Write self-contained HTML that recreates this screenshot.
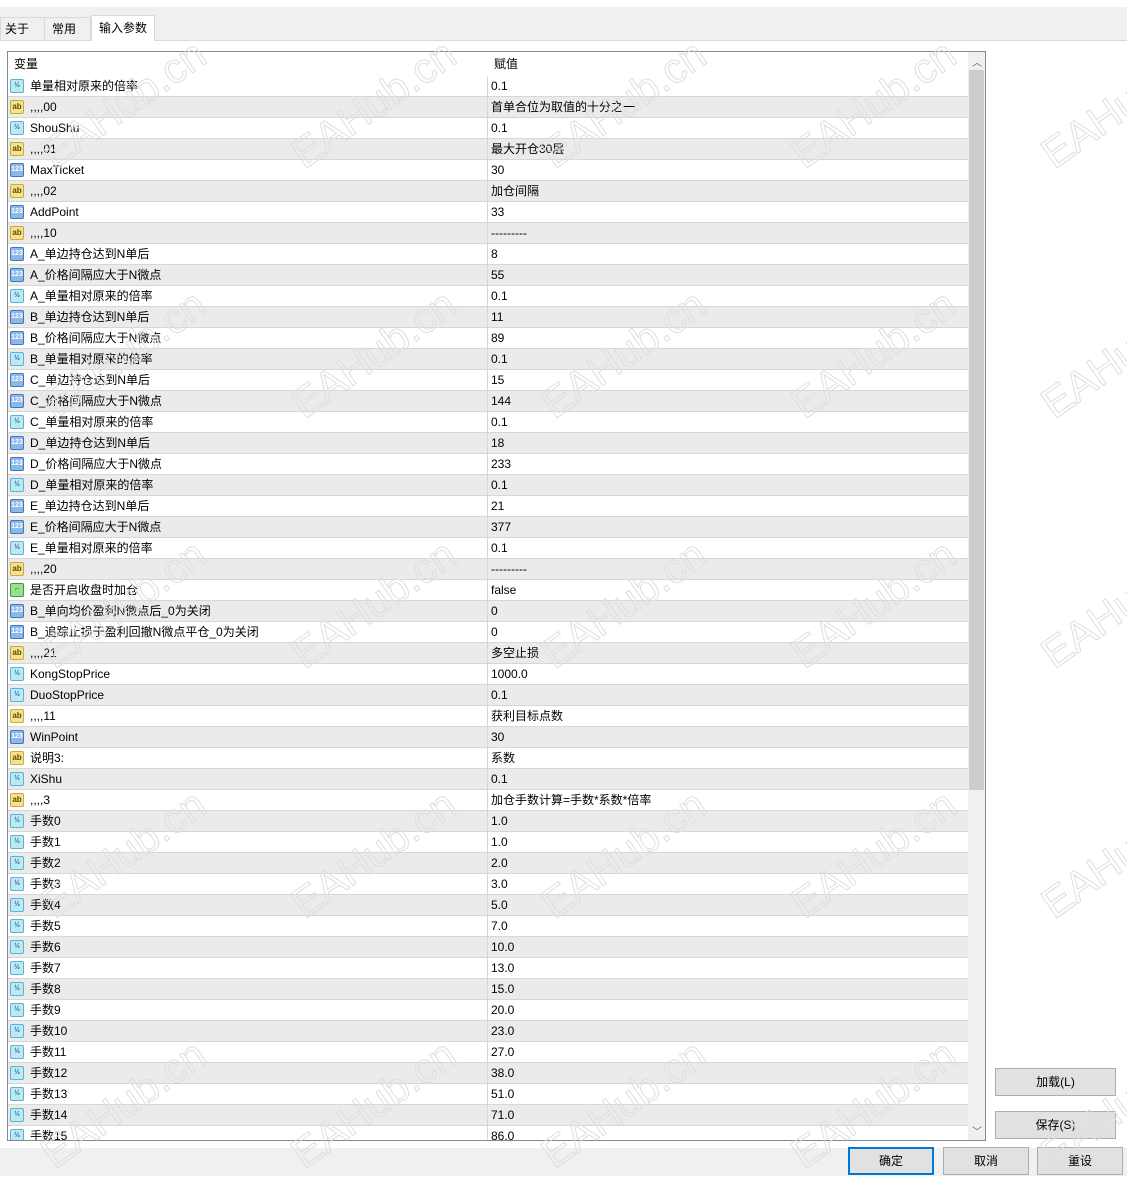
<!DOCTYPE html><html><head><meta charset="utf-8"><style>
body{margin:0;width:1127px;height:1176px;position:relative;overflow:hidden;background:#fff;font-family:"Liberation Sans","Noto Sans CJK SC",sans-serif;font-size:12px;color:#000}
.top{position:absolute;left:0;top:7px;width:1127px;height:33px;background:#f0f0f0;border-bottom:1px solid #d9d9d9}
.tab{position:absolute;top:17px;height:23px;line-height:23px;background:#f0f0f0;border:1px solid #d9d9d9;border-bottom:none;padding:0 4px;box-sizing:border-box}
.tab.on{top:15px;height:26px;background:#fff;line-height:25px}
.bot{position:absolute;left:0;top:1148px;width:1127px;height:28px;background:#f0f0f0}
.list{position:absolute;left:7px;top:51px;width:979px;height:1090px;border:1px solid #828790;box-sizing:border-box;overflow:hidden;background:#fff}
.hd{position:absolute;left:0;top:0;width:960px;height:24px}
.hd span{position:absolute;top:2px;line-height:20px}
.r{position:absolute;left:0;width:960px;height:21px;border-bottom:1px solid #d7d7d7;box-sizing:border-box}
.r.g{background:#ebebeb}
.r .n{position:absolute;left:22px;top:0;line-height:20px;height:20px;white-space:nowrap}
.r .v{position:absolute;left:483px;top:0;line-height:20px;height:20px;white-space:nowrap}
.r:before{content:"";position:absolute;left:479px;top:0;height:21px;border-left:1px solid #d7d7d7}
.ic{position:absolute;left:2px;top:3px;width:14px;height:14px;border-radius:2px;font-size:7px;line-height:12px;text-align:center;font-weight:bold;box-sizing:border-box}
.d{background:#bfe8f5;border:1px solid #59b4d4;color:#2a6f8a}
.a{background:#f5e28a;border:1px solid #c9a93a;color:#5a4a10;font-size:8px}
.i{background:#8db7e6;border:1px solid #3f78be;color:#fff}
.b{background:#9be08e;border:1px solid #3b9a35;color:#1f6a1a}
.sb{position:absolute;left:960px;top:0;width:17px;height:1088px;background:#f0f0f0}
.th{position:absolute;left:1px;top:18px;width:15px;height:720px;background:#cdcdcd}
.btn{position:absolute;width:121px;height:28px;background:#e1e1e1;border:1px solid #adadad;box-sizing:border-box;text-align:center;line-height:26px}
.wm{position:absolute;font-size:42px;color:transparent;-webkit-text-stroke:1px #dedede;transform:rotate(-35deg);transform-origin:left bottom;white-space:nowrap;font-family:"Liberation Sans",sans-serif;pointer-events:none}
</style></head><body>
<div class="top"></div>
<div class="tab" style="left:0;width:45px">关于</div>
<div class="tab" style="left:44px;width:47px;padding-left:7px">常用</div>
<div class="tab on" style="left:91px;width:64px;padding-left:7px">输入参数</div>
<div class="bot"></div>
<div class="list">
<div class="hd"><span style="left:6px">变量</span><span style="left:486px">赋值</span></div>
<div style="position:absolute;left:0;top:24px;width:960px">
<div class="r" style="top:0"><span class="ic d">½</span><span class="n">单量相对原来的倍率</span><span class="v">0.1</span></div>
<div class="r g" style="top:21px"><span class="ic a">ab</span><span class="n">,,,,00</span><span class="v">首单合位为取值的十分之一</span></div>
<div class="r" style="top:42px"><span class="ic d">½</span><span class="n">ShouShu</span><span class="v">0.1</span></div>
<div class="r g" style="top:63px"><span class="ic a">ab</span><span class="n">,,,,01</span><span class="v">最大开仓30层</span></div>
<div class="r" style="top:84px"><span class="ic i">123</span><span class="n">MaxTicket</span><span class="v">30</span></div>
<div class="r g" style="top:105px"><span class="ic a">ab</span><span class="n">,,,,02</span><span class="v">加仓间隔</span></div>
<div class="r" style="top:126px"><span class="ic i">123</span><span class="n">AddPoint</span><span class="v">33</span></div>
<div class="r g" style="top:147px"><span class="ic a">ab</span><span class="n">,,,,10</span><span class="v">---------</span></div>
<div class="r" style="top:168px"><span class="ic i">123</span><span class="n">A_单边持仓达到N单后</span><span class="v">8</span></div>
<div class="r g" style="top:189px"><span class="ic i">123</span><span class="n">A_价格间隔应大于N微点</span><span class="v">55</span></div>
<div class="r" style="top:210px"><span class="ic d">½</span><span class="n">A_单量相对原来的倍率</span><span class="v">0.1</span></div>
<div class="r g" style="top:231px"><span class="ic i">123</span><span class="n">B_单边持仓达到N单后</span><span class="v">11</span></div>
<div class="r" style="top:252px"><span class="ic i">123</span><span class="n">B_价格间隔应大于N微点</span><span class="v">89</span></div>
<div class="r g" style="top:273px"><span class="ic d">½</span><span class="n">B_单量相对原来的倍率</span><span class="v">0.1</span></div>
<div class="r" style="top:294px"><span class="ic i">123</span><span class="n">C_单边持仓达到N单后</span><span class="v">15</span></div>
<div class="r g" style="top:315px"><span class="ic i">123</span><span class="n">C_价格间隔应大于N微点</span><span class="v">144</span></div>
<div class="r" style="top:336px"><span class="ic d">½</span><span class="n">C_单量相对原来的倍率</span><span class="v">0.1</span></div>
<div class="r g" style="top:357px"><span class="ic i">123</span><span class="n">D_单边持仓达到N单后</span><span class="v">18</span></div>
<div class="r" style="top:378px"><span class="ic i">123</span><span class="n">D_价格间隔应大于N微点</span><span class="v">233</span></div>
<div class="r g" style="top:399px"><span class="ic d">½</span><span class="n">D_单量相对原来的倍率</span><span class="v">0.1</span></div>
<div class="r" style="top:420px"><span class="ic i">123</span><span class="n">E_单边持仓达到N单后</span><span class="v">21</span></div>
<div class="r g" style="top:441px"><span class="ic i">123</span><span class="n">E_价格间隔应大于N微点</span><span class="v">377</span></div>
<div class="r" style="top:462px"><span class="ic d">½</span><span class="n">E_单量相对原来的倍率</span><span class="v">0.1</span></div>
<div class="r g" style="top:483px"><span class="ic a">ab</span><span class="n">,,,,20</span><span class="v">---------</span></div>
<div class="r" style="top:504px"><span class="ic b">⌐</span><span class="n">是否开启收盘时加仓</span><span class="v">false</span></div>
<div class="r g" style="top:525px"><span class="ic i">123</span><span class="n">B_单向均价盈利N微点后_0为关闭</span><span class="v">0</span></div>
<div class="r" style="top:546px"><span class="ic i">123</span><span class="n">B_追踪止损于盈利回撤N微点平仓_0为关闭</span><span class="v">0</span></div>
<div class="r g" style="top:567px"><span class="ic a">ab</span><span class="n">,,,,21</span><span class="v">多空止损</span></div>
<div class="r" style="top:588px"><span class="ic d">½</span><span class="n">KongStopPrice</span><span class="v">1000.0</span></div>
<div class="r g" style="top:609px"><span class="ic d">½</span><span class="n">DuoStopPrice</span><span class="v">0.1</span></div>
<div class="r" style="top:630px"><span class="ic a">ab</span><span class="n">,,,,11</span><span class="v">获利目标点数</span></div>
<div class="r g" style="top:651px"><span class="ic i">123</span><span class="n">WinPoint</span><span class="v">30</span></div>
<div class="r" style="top:672px"><span class="ic a">ab</span><span class="n">说明3:</span><span class="v">系数</span></div>
<div class="r g" style="top:693px"><span class="ic d">½</span><span class="n">XiShu</span><span class="v">0.1</span></div>
<div class="r" style="top:714px"><span class="ic a">ab</span><span class="n">,,,,3</span><span class="v">加仓手数计算=手数*系数*倍率</span></div>
<div class="r g" style="top:735px"><span class="ic d">½</span><span class="n">手数0</span><span class="v">1.0</span></div>
<div class="r" style="top:756px"><span class="ic d">½</span><span class="n">手数1</span><span class="v">1.0</span></div>
<div class="r g" style="top:777px"><span class="ic d">½</span><span class="n">手数2</span><span class="v">2.0</span></div>
<div class="r" style="top:798px"><span class="ic d">½</span><span class="n">手数3</span><span class="v">3.0</span></div>
<div class="r g" style="top:819px"><span class="ic d">½</span><span class="n">手数4</span><span class="v">5.0</span></div>
<div class="r" style="top:840px"><span class="ic d">½</span><span class="n">手数5</span><span class="v">7.0</span></div>
<div class="r g" style="top:861px"><span class="ic d">½</span><span class="n">手数6</span><span class="v">10.0</span></div>
<div class="r" style="top:882px"><span class="ic d">½</span><span class="n">手数7</span><span class="v">13.0</span></div>
<div class="r g" style="top:903px"><span class="ic d">½</span><span class="n">手数8</span><span class="v">15.0</span></div>
<div class="r" style="top:924px"><span class="ic d">½</span><span class="n">手数9</span><span class="v">20.0</span></div>
<div class="r g" style="top:945px"><span class="ic d">½</span><span class="n">手数10</span><span class="v">23.0</span></div>
<div class="r" style="top:966px"><span class="ic d">½</span><span class="n">手数11</span><span class="v">27.0</span></div>
<div class="r g" style="top:987px"><span class="ic d">½</span><span class="n">手数12</span><span class="v">38.0</span></div>
<div class="r" style="top:1008px"><span class="ic d">½</span><span class="n">手数13</span><span class="v">51.0</span></div>
<div class="r g" style="top:1029px"><span class="ic d">½</span><span class="n">手数14</span><span class="v">71.0</span></div>
<div class="r" style="top:1050px"><span class="ic d">½</span><span class="n">手数15</span><span class="v">86.0</span></div>
</div>
<div class="sb"><div style="position:absolute;left:4px;top:2px;font-size:10px;color:#606060">︿</div><div class="th"></div><div style="position:absolute;left:4px;bottom:2px;font-size:10px;color:#606060">﹀</div></div>
</div>
<div class="btn" style="left:995px;top:1068px">加载(L)</div>
<div class="btn" style="left:995px;top:1111px">保存(S)</div>
<div class="btn" style="left:848px;top:1147px;width:86px;border:2px solid #0078d7;line-height:24px">确定</div>
<div class="btn" style="left:943px;top:1147px;width:86px">取消</div>
<div class="btn" style="left:1037px;top:1147px;width:86px">重设</div>
<div class="wm" style="left:60px;top:130px">EAHub.cn</div>
<div class="wm" style="left:310px;top:130px">EAHub.cn</div>
<div class="wm" style="left:560px;top:130px">EAHub.cn</div>
<div class="wm" style="left:810px;top:130px">EAHub.cn</div>
<div class="wm" style="left:1060px;top:130px">EAHub.cn</div>
<div class="wm" style="left:60px;top:380px">EAHub.cn</div>
<div class="wm" style="left:310px;top:380px">EAHub.cn</div>
<div class="wm" style="left:560px;top:380px">EAHub.cn</div>
<div class="wm" style="left:810px;top:380px">EAHub.cn</div>
<div class="wm" style="left:1060px;top:380px">EAHub.cn</div>
<div class="wm" style="left:60px;top:630px">EAHub.cn</div>
<div class="wm" style="left:310px;top:630px">EAHub.cn</div>
<div class="wm" style="left:560px;top:630px">EAHub.cn</div>
<div class="wm" style="left:810px;top:630px">EAHub.cn</div>
<div class="wm" style="left:1060px;top:630px">EAHub.cn</div>
<div class="wm" style="left:60px;top:880px">EAHub.cn</div>
<div class="wm" style="left:310px;top:880px">EAHub.cn</div>
<div class="wm" style="left:560px;top:880px">EAHub.cn</div>
<div class="wm" style="left:810px;top:880px">EAHub.cn</div>
<div class="wm" style="left:1060px;top:880px">EAHub.cn</div>
<div class="wm" style="left:60px;top:1130px">EAHub.cn</div>
<div class="wm" style="left:310px;top:1130px">EAHub.cn</div>
<div class="wm" style="left:560px;top:1130px">EAHub.cn</div>
<div class="wm" style="left:810px;top:1130px">EAHub.cn</div>
<div class="wm" style="left:1060px;top:1130px">EAHub.cn</div>
</body></html>
